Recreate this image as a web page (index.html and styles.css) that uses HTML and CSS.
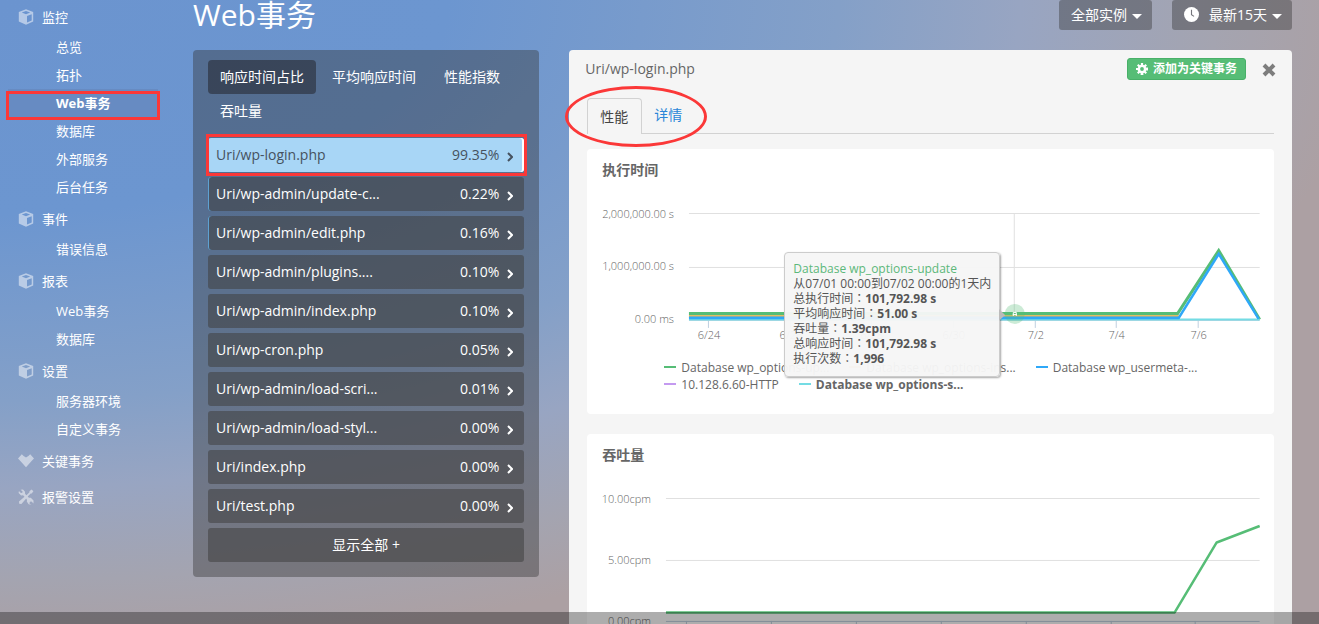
FILE: index.html
```html
<!DOCTYPE html>
<html lang="zh-CN">
<head>
<meta charset="utf-8">
<meta name="viewport" content="width=device-width, initial-scale=1">
<title>Web事务</title>
<link rel="stylesheet" href="styles.css">
</head>
<body>
<svg class="sprite" aria-hidden="true">
  <symbol id="cube" viewBox="0 0 16 16">
    <path fill-rule="evenodd" d="M8 .3 15.200 3v9.600L8 15.800.8 12.600V3zM8 2 3.800 3.600 8 5.200l4.200-1.600zM9 7v6.600l4.700-2.100V5.200z"/>
  </symbol>
  <symbol id="chevron" viewBox="0 0 6 10">
    <path d="M1 1l4 4-4 4" fill="none" stroke="currentColor" stroke-width="2"/>
  </symbol>
</svg>
<div class="app">
  <nav class="sidebar">
    <section class="nav-group">
      <h2 class="nav-title"><svg class="nav-icon"><use href="#cube"/></svg>监控</h2>
      <ul class="nav-list">
        <li><a class="nav-link" href="#">总览</a></li>
        <li><a class="nav-link" href="#">拓扑</a></li>
        <li><a class="nav-link nav-link--active" href="#">Web事务</a></li>
        <li><a class="nav-link" href="#">数据库</a></li>
        <li><a class="nav-link" href="#">外部服务</a></li>
        <li><a class="nav-link" href="#">后台任务</a></li>
      </ul>
    </section>
    <section class="nav-group">
      <h2 class="nav-title"><svg class="nav-icon"><use href="#cube"/></svg>事件</h2>
      <ul class="nav-list">
        <li><a class="nav-link" href="#">错误信息</a></li>
      </ul>
    </section>
    <section class="nav-group">
      <h2 class="nav-title"><svg class="nav-icon"><use href="#cube"/></svg>报表</h2>
      <ul class="nav-list">
        <li><a class="nav-link" href="#">Web事务</a></li>
        <li><a class="nav-link" href="#">数据库</a></li>
      </ul>
    </section>
    <section class="nav-group">
      <h2 class="nav-title"><svg class="nav-icon"><use href="#cube"/></svg>设置</h2>
      <ul class="nav-list">
        <li><a class="nav-link" href="#">服务器环境</a></li>
        <li><a class="nav-link" href="#">自定义事务</a></li>
      </ul>
    </section>
    <section class="nav-group nav-group--single">
      <a class="nav-title" href="#"><svg class="nav-icon" viewBox="0 0 16 16"><path d="M3.800 1.200 5.600 3 8 4.400 10.400 3l1.800-1.800L16 5.400l-1.700 1.800L8 14.300 1.700 7.200 0 5.400z"/></svg>关键事务</a>
    </section>
    <section class="nav-group nav-group--single">
      <a class="nav-title" href="#"><svg class="nav-icon" viewBox="0 0 16 16"><path d="M2.600.8 5 .5l2 2.300.1 2.100 1.400 1.400 3-3.100-.1-1L13.600.6l1.800 1.600-1.700 2.300-1-.1-3 3.100 1.200 1.200 1.900.1 2.700 2.600v3l-2-2-1.600.4-.5 1.600 2 1.400-2.800-.5-1.800-2.700.2-1.600L8.200 9.400l-4.800 5.500-2.200-.2-.2-2.200 5.500-4.800-1.400-1.400-2 .1L.6 4l.3-2 2 2 1.400-.3.3-1.300z"/></svg>报警设置</a>
    </section>
  </nav>

  <main class="main">
    <header class="header">
      <h1 class="page-title">Web事务</h1>
      <div class="header-actions">
        <button class="drop" type="button">全部实例<span class="caret"></span></button>
        <button class="drop" type="button"><svg class="clock" viewBox="0 0 16 16"><circle cx="8" cy="8" r="8" fill="#fff"/><path d="M8 3v5.300l2.700 1.700" fill="none" stroke="#75757c" stroke-width="1.200"/></svg>最新15天<span class="caret"></span></button>
      </div>
    </header>

    <div class="columns">
      <section class="list-panel">
        <div class="sort-tabs">
          <button class="sort-tab sort-tab--active" type="button">响应时间占比</button>
          <button class="sort-tab" type="button">平均响应时间</button>
          <button class="sort-tab" type="button">性能指数</button>
          <button class="sort-tab" type="button">吞吐量</button>
        </div>
        <ul class="uri-list">
          <li><a class="uri uri--active" href="#"><span class="uri-name">Uri/wp-login.php</span><span>99.35%</span><svg class="chevron"><use href="#chevron"/></svg></a></li>
          <li><a class="uri uri--bar" href="#"><span class="uri-name">Uri/wp-admin/update-c...</span><span>0.22%</span><svg class="chevron"><use href="#chevron"/></svg></a></li>
          <li><a class="uri uri--bar" href="#"><span class="uri-name">Uri/wp-admin/edit.php</span><span>0.16%</span><svg class="chevron"><use href="#chevron"/></svg></a></li>
          <li><a class="uri" href="#"><span class="uri-name">Uri/wp-admin/plugins....</span><span>0.10%</span><svg class="chevron"><use href="#chevron"/></svg></a></li>
          <li><a class="uri" href="#"><span class="uri-name">Uri/wp-admin/index.php</span><span>0.10%</span><svg class="chevron"><use href="#chevron"/></svg></a></li>
          <li><a class="uri" href="#"><span class="uri-name">Uri/wp-cron.php</span><span>0.05%</span><svg class="chevron"><use href="#chevron"/></svg></a></li>
          <li><a class="uri" href="#"><span class="uri-name">Uri/wp-admin/load-scri...</span><span>0.01%</span><svg class="chevron"><use href="#chevron"/></svg></a></li>
          <li><a class="uri" href="#"><span class="uri-name">Uri/wp-admin/load-styl...</span><span>0.00%</span><svg class="chevron"><use href="#chevron"/></svg></a></li>
          <li><a class="uri" href="#"><span class="uri-name">Uri/index.php</span><span>0.00%</span><svg class="chevron"><use href="#chevron"/></svg></a></li>
          <li><a class="uri" href="#"><span class="uri-name">Uri/test.php</span><span>0.00%</span><svg class="chevron"><use href="#chevron"/></svg></a></li>
        </ul>
        <button class="show-all" type="button">显示全部 +</button>
      </section>

      <section class="detail">
        <header class="detail-head">
          <h2 class="detail-title">Uri/wp-login.php</h2>
          <button class="key-button" type="button"><svg class="gear" viewBox="0 0 12 12"><g fill="#fff"><circle cx="6" cy="6" r="4.300"/><path d="M4.900 0h2.200l.3 12H4.600zM0 4.900v2.200l12 .3V4.600zM1 2.500 2.500 1l8.500 8.500L9.500 11zM9.500 1 11 2.500 2.500 11 1 9.500z"/></g><circle cx="6" cy="6" r="1.900" fill="#56bd76"/></svg>添加为关键事务</button>
          <button class="close" type="button" aria-label="关闭"><svg viewBox="0 0 14 14" width="14" height="14"><path d="M2 2l10 10M12 2 2 12" stroke="#7d7d7d" stroke-width="4"/></svg></button>
        </header>
        <div class="detail-tabs">
          <button class="detail-tab detail-tab--active" type="button">性能</button>
          <button class="detail-tab" type="button">详情</button>
          <span class="ring"></span>
        </div>

        <article class="card">
          <h3 class="card-title">执行时间</h3>
          <svg class="chart" viewBox="0 0 687 157">
            <path class="grid" d="M102 20.500h571M102 74.500h571M427.500 20v107"/>
            <g class="axis-text" text-anchor="end">
              <text x="87" y="25">2,000,000.00 s</text>
              <text x="87" y="77">1,000,000.00 s</text>
              <text x="87" y="130">0.00 ms</text>
            </g>
            <path class="axis" d="M102 127.500h571M121.500 127v8M203.500 127v8M284.500 127v8M366.500 127v8M448.500 127v8M529.500 127v8M611.500 127v8"/>
            <g class="axis-text" text-anchor="middle">
              <text x="122" y="146">6/24</text>
              <text x="204" y="146">6/26</text>
              <text x="285" y="146">6/28</text>
              <text x="367" y="146">6/30</text>
              <text x="449" y="146">7/2</text>
              <text x="530" y="146">7/4</text>
              <text x="612" y="146">7/6</text>
            </g>
            <g class="series">
              <path stroke="#56bd76" d="M102 120.500h489l41-63 41 69"/>
              <path stroke="#e5bd62" stroke-width="2" d="M102 123h490"/>
              <path stroke="#68a9ba" stroke-width="2" d="M102 124.500h490"/>
              <path stroke="#74dce4" stroke-width="2" d="M102 126.500h571"/>
              <path stroke="#2fa8f8" stroke-width="2.500" d="M102 125h490l40-64 40 65"/>
            </g>
            <circle cx="428" cy="121" r="10" fill="#56bd76" fill-opacity=".3"/>
            <path d="M426.500 123v-3.500h3V123M426 121.500h4" fill="none" stroke="#fff"/>
          </svg>
          <ul class="legend">
            <li><i class="swatch swatch--green"></i>Database wp_options-up...</li>
            <li><i class="swatch swatch--orange"></i>Database wp_options-ins...</li>
            <li><i class="swatch swatch--blue"></i>Database wp_usermeta-...</li>
            <li><i class="swatch swatch--violet"></i>10.128.6.60-HTTP</li>
            <li class="legend-strong"><i class="swatch swatch--cyan"></i>Database wp_options-s...</li>
          </ul>
          <div class="tip">
            <div class="tip-name">Database wp_options-update</div>
            <div>从07/01 00:00到07/02 00:00的1天内</div>
            <div>总执行时间<span class="colon" lang="zh-TW">：</span><b>101,792.98 s</b></div>
            <div>平均响应时间<span class="colon" lang="zh-TW">：</span><b>51.00 s</b></div>
            <div>吞吐量<span class="colon" lang="zh-TW">：</span><b>1.39cpm</b></div>
            <div>总响应时间<span class="colon" lang="zh-TW">：</span><b>101,792.98 s</b></div>
            <div>执行次数<span class="colon" lang="zh-TW">：</span><b>1,996</b></div>
          </div>
        </article>

        <article class="card">
          <h3 class="card-title">吞吐量</h3>
          <svg class="chart" viewBox="0 0 687 180">
            <path class="grid" d="M79 20.500h594M79 82.500h594"/>
            <path class="axis" d="M79 143.500h594M99.500 143v8M184.500 143v8M269.500 143v8M354.500 143v8M439.500 143v8M524.500 143v8M608.500 143v8"/>
            <g class="axis-text" text-anchor="end">
              <text x="64" y="25">10.00cpm</text>
              <text x="64" y="86">5.00cpm</text>
              <text x="64" y="147">0.00cpm</text>
            </g>
            <path fill="none" stroke="#56bd76" stroke-width="2.500" stroke-linejoin="round" d="M79 134.500h509l42-70 43-16.500"/>
          </svg>
        </article>
      </section>
    </div>
  </main>
</div>
<div class="bottom-bar"></div>
</body>
</html>
```
FILE: styles.css
```css
* { box-sizing: border-box; }

body {
  margin: 0;
  height: 100vh;
  overflow: hidden;
  font-family: "Open Sans", "Noto Sans CJK SC", sans-serif;
  font-size: 14px;
  line-height: 20px;
  color: #fff;
  background: radial-gradient(ellipse 106% 107% at 0 0, #6b94cf 0%, #6c96d0 32%, #84a0c8 60%, #98a5c2 73%, #a4a4b0 87%, #aca0a3 98%);
}

h1, h2, h3, ul { margin: 0; padding: 0; font-weight: 400; }
ul { list-style: none; }
a { color: inherit; text-decoration: none; }
button { font: inherit; color: inherit; border: 0; padding: 0; background: none; white-space: nowrap; }
.sprite { position: absolute; width: 0; height: 0; }

.app { display: flex; }

/* Sidebar */
.sidebar { flex: 0 0 193px; font-size: 13px; }
.nav-group { padding-top: 2px; }
.nav-group:first-child { padding-top: 1px; }
.nav-group--single { padding-bottom: 2px; }
.nav-title {
  display: flex;
  align-items: center;
  gap: 8px;
  height: 32px;
  padding-left: 18px;
  font-size: 13px;
}
.nav-icon { width: 16px; height: 16px; fill: #fff; opacity: .5; }
.nav-link { display: block; height: 28px; padding-left: 56px; line-height: 28px; }
.nav-link--active { position: relative; font-weight: 700; background: linear-gradient(90deg, transparent 8px, #678bc2 8px, #678bc2 158px, transparent 158px); }
.nav-link--active::after {
  content: "";
  position: absolute;
  inset: 2px 33px -3px 6px;
  border: 3px solid #fb3838;
}

/* Header */
.main { flex: 1; min-width: 0; padding-right: 27px; }
.header { display: flex; justify-content: space-between; height: 50px; }
.page-title { font-size: 30px; line-height: 30px; }
.header-actions { display: flex; align-items: flex-start; gap: 20px; }
.drop {
  display: flex;
  align-items: center;
  height: 30px;
  padding: 0 10px 0 12px;
  border-radius: 3px;
  background: rgba(50, 50, 50, .4);
}
.clock { width: 15px; height: 15px; margin: 0 10px 2px 0; }
.caret { margin: 3px 0 0 5px; border: 5px solid transparent; border-top-color: #fff; border-bottom: 0; }

.columns { display: grid; grid-template-columns: repeat(12, minmax(0, 1fr)); gap: 30px; align-items: start; }

/* URI list */
.list-panel { grid-column: span 4; padding: 10px 15px 15px; border-radius: 4px; background: rgba(50, 50, 50, .4); }
.sort-tabs { display: flex; flex-wrap: wrap; column-gap: 4px; margin-bottom: 10px; }
.sort-tab { height: 34px; padding: 0 12px; border-radius: 4px; }
.sort-tab--active { background: rgba(40, 44, 54, .6); }
.uri-list { display: grid; gap: 5px; margin-bottom: 5px; }
.uri {
  position: relative;
  display: flex;
  align-items: center;
  height: 34px;
  padding: 0 11px 0 8px;
  border-radius: 3px;
  background: rgba(64, 64, 64, .55);
}
.uri-name { flex: 1; }
.chevron { width: 6px; height: 10px; margin: 4px 0 0 8px; }
.uri--bar { box-shadow: inset 1px 0 #5ea1d2; }
.uri--active { color: #46525f; background: #a8d6f6; box-shadow: inset -2px 0 #fff; }
.uri--active::after { content: ""; position: absolute; inset: -4px -3px -4px -2px; border: 3px solid #fb3838; }
.show-all { width: 100%; height: 34px; border-radius: 3px; background: rgba(64, 64, 64, .55); }

/* Detail panel */
.detail { grid-column: span 8; padding: 0 18px; border-radius: 4px; background: #f5f5f5; color: #666; }
.detail-head { display: flex; align-items: center; height: 38px; margin-left: -2px; }
.detail-title { flex: 1; font-size: 14px; }
.key-button {
  display: flex;
  align-items: center;
  gap: 5px;
  height: 22px;
  padding: 0 8px;
  border: 1px solid #48b068;
  border-radius: 3px;
  background: #56bd76;
  color: #fff;
  font-size: 12px;
  font-weight: 700;
}
.gear { width: 12px; height: 12px; }
.close { display: flex; margin: 2px -2px 0 16px; }
.detail-tabs {
  position: relative;
  display: flex;
  height: 36px;
  margin: 10px 0 15px;
  border-bottom: 1px solid #d2d2d2;
}
.detail-tab { height: 35px; padding: 0 12px 2px; color: #2a86d8; }
.detail-tab--active {
  height: 36px;
  padding: 1px 13px 0 12px;
  border: 1px solid #d2d2d2;
  border-bottom: 0;
  border-radius: 4px 4px 0 0;
  background: #f5f5f5;
  color: #444;
}
.ring {
  position: absolute;
  left: -22px;
  top: -12px;
  width: 142px;
  height: 61px;
  border: 3px solid #fb3838;
  border-radius: 50%;
}

/* Chart cards */
.card { position: relative; margin-bottom: 20px; padding-bottom: 21px; border-radius: 4px; background: #fff; }
.card-title { height: 44px; padding: 11px 15px; font-size: 14px; font-weight: 700; color: #666; }
.chart { display: block; width: 100%; height: auto; }
.grid { fill: none; stroke: #e0e0e0; }
.axis { fill: none; stroke: #c0d0e0; }
.axis-text { font-size: 11px; font-weight: 300; fill: #666; }
.series { fill: none; stroke-width: 3; }

.legend {
  display: flex;
  flex-wrap: wrap;
  column-gap: 20px;
  padding: 9px 70px 0 77px;
  font-size: 12px;
  line-height: 17px;
}
.legend li { display: flex; align-items: center; gap: 5px; }
.legend-strong { font-weight: 700; }
.swatch { width: 12px; height: 2px; }
.swatch--green { background: #56bd76; }
.swatch--orange { background: #f3b95f; }
.swatch--blue { background: #2fa8f8; }
.swatch--violet { background: #c49af0; }
.swatch--cyan { background: #74dce4; }

.tip {
  position: absolute;
  left: 197px;
  top: 103px;
  padding: 8px 8px 10px;
  border: 1px solid #ccc;
  border-radius: 4px;
  background: rgba(246, 246, 246, .96);
  box-shadow: 1px 1px 2px rgba(0, 0, 0, .35);
  font-size: 12px;
  line-height: 15px;
  white-space: nowrap;
  color: #555;
}
.tip::after {
  content: "";
  position: absolute;
  left: 100%;
  top: 56px;
  border: 6px solid transparent;
  border-left-color: #bbb;
  border-right: 0;
}
.tip-name { color: #5cb87a; }
.colon { font-family: "Noto Sans CJK TC", sans-serif; line-height: 1; }

.bottom-bar { position: fixed; inset: auto 0 0; height: 12px; background: rgba(0, 0, 0, .32); }
```
